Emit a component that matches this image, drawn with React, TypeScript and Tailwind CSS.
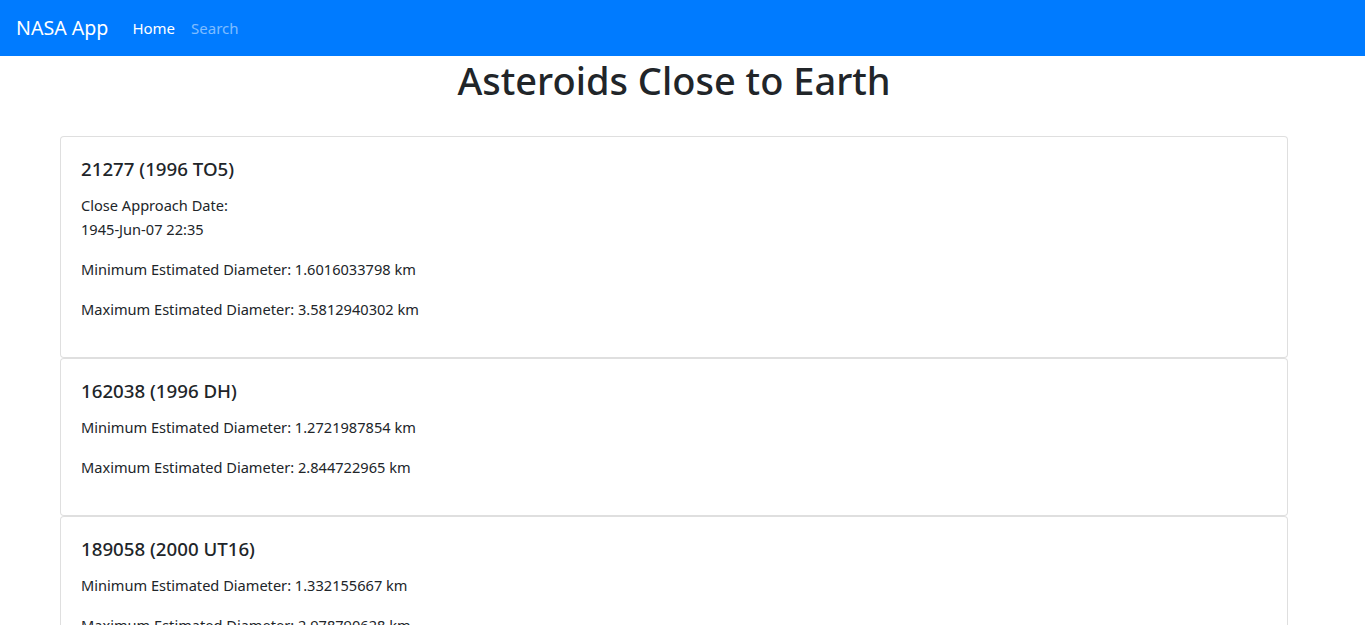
const ASTEROIDS = [
  {
    name: "21277 (1996 TO5)",
    approach: "1945-Jun-07 22:35",
    min: "1.6016033798",
    max: "3.5812940302",
  },
  { name: "162038 (1996 DH)", min: "1.2721987854", max: "2.844722965" },
  { name: "189058 (2000 UT16)", min: "1.332155667", max: "2.978790628" },
  { name: "276049 (2002 CE26)", min: "2.1019564018", max: "4.7001771014" },
  { name: "322763 (2001 VP7)", min: "0.5797455912", max: "1.2963411823" },
];

export default function App() {
  return (
    <div className="min-h-screen bg-white text-[#212529] font-['Noto_Sans','Open_Sans',sans-serif] text-[14.6px] leading-6">
      {/* Navbar */}
      <nav className="flex items-center bg-[#007bff] px-4 py-2 text-[15px]">
        <span className="py-[5px] mr-4 text-[19.6px] leading-[30px] text-white">NASA App</span>
        <div className="flex">
          <span className="px-2 py-2 text-white">Home</span>
          <span className="px-2 py-2 text-white/50">Search</span>
        </div>
      </nav>

      <div className="pr-[17px]">
        <h1 className="mb-2 text-center text-[38px] font-medium leading-[48px]">
          Asteroids Close to Earth
        </h1>

        {/* Lista de asteroides */}
        <div className="mx-[60px] mt-8">
          {ASTEROIDS.map((a) => (
            <div key={a.name} className="rounded border border-black/[.125] bg-white p-5">
              <h5 className="mb-3 text-[18.7px] font-medium leading-6">{a.name}</h5>
              {a.approach && (
                <p className="mb-4">
                  Close Approach Date:
                  <br />
                  {a.approach}
                </p>
              )}
              <p className="mb-4">Minimum Estimated Diameter: {a.min} km</p>
              <p className="mb-4">Maximum Estimated Diameter: {a.max} km</p>
            </div>
          ))}
        </div>
      </div>
    </div>
  );
}
